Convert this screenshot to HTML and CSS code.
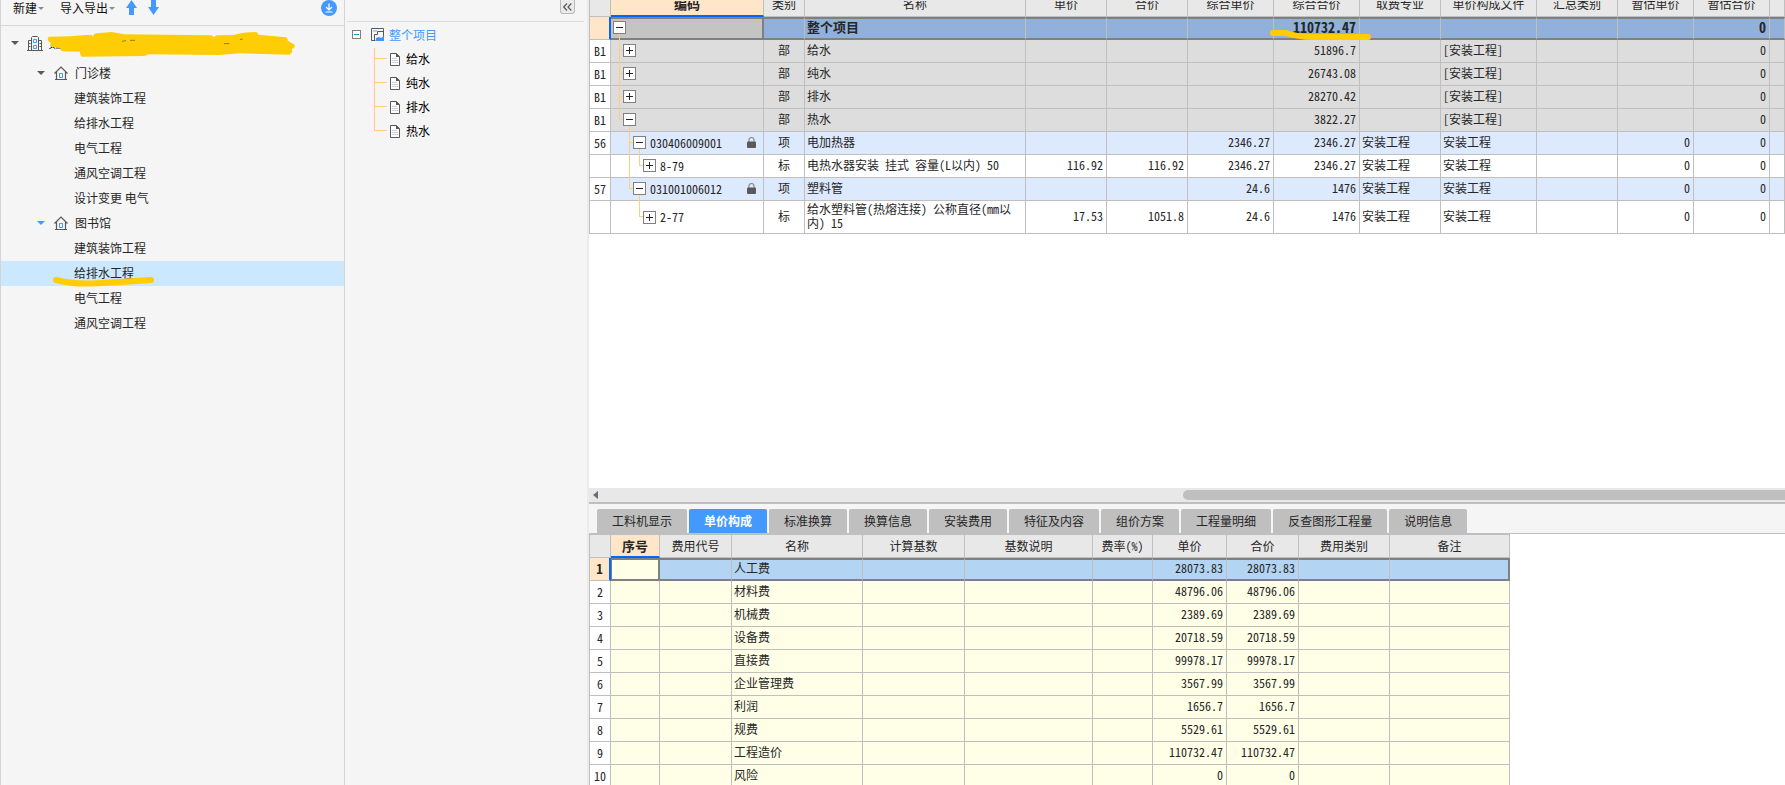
FILE: index.html
```html
<!DOCTYPE html>
<html lang="zh-CN">
<head>
<meta charset="utf-8">
<title>工程计价</title>
<link rel="stylesheet" href="styles.css">
</head>
<body>
<svg class="defs" aria-hidden="true">
  <symbol id="house" viewBox="0 0 14 14">
    <path d="M.5 7.500 7 1l6.500 6.500M2.500 6v7M11.500 6v7M1 13.500h12" fill="none" stroke="#595959" stroke-width="1.200"/>
    <path d="M5.500 7.500h3v4h-3z" fill="none" stroke="#4499ff"/>
  </symbol>
  <symbol id="doc" viewBox="0 0 10 13">
    <path d="M.5.5h6l3 3v9h-9z" fill="#fff" stroke="#595959"/>
    <path d="M6 0v4h4z" fill="#595959"/>
    <path d="M2 5.500h5M2 7.500h6M2 9.500h6" stroke="#d0d0d0"/>
  </symbol>
  <symbol id="lock" viewBox="0 0 9 11">
    <path d="M2 5V3a2.500 2.500 0 0 1 5 0v2" fill="none" stroke="#8c8c8c" stroke-width="1.200"/>
    <rect y="4.500" width="9" height="6.500" rx="1" fill="#595959"/>
  </symbol>
</svg>
<div class="app">
  <aside class="projects">
    <div class="toolbar">
      <button class="menu">新建<i class="caret"></i></button>
      <button class="menu">导入导出<i class="caret"></i></button>
      <button class="tool" aria-label="上移"><svg width="11" height="15" viewBox="0 0 11 15"><path d="M5.500 0 11 8H8v7H3V8H0z" fill="#4499ff"/></svg></button>
      <button class="tool" aria-label="下移"><svg width="11" height="15" viewBox="0 0 11 15"><path d="M5.500 15 0 7h3V0h5v7h3z" fill="#4499ff"/></svg></button>
      <button class="tool download" aria-label="下载"><svg width="16" height="16" viewBox="0 0 16 16"><circle cx="8" cy="8" r="8" fill="#4499ff"/><path d="M8 3.500v6M5 7l3 3 3-3M4.500 12h7" fill="none" stroke="#fff" stroke-width="1.200"/></svg></button>
    </div>
    <ul class="tree">
      <li class="root"><i class="arrow"></i>
        <svg width="16" height="16" viewBox="0 0 16 16"><path d="M4.500 15V2.500l1-1h5l1 1V15M1.500 15V5.500h3M14.500 15V5.500h-3M0 15.500h16M1.500 8.500h2M1.500 11.500h2M12.500 8.500h2M12.500 11.500h2" fill="none" stroke="#595959"/><path d="M6.500 4.500h3v3h-3zM6.500 10.500h3v3h-3z" fill="none" stroke="#4499ff"/></svg>
        <svg class="brush" width="249" height="27" viewBox="141 93 747 81" aria-hidden="true">
          <path d="M148 146l10-5M152 136l14 10M168 144h16" stroke="#262626" stroke-width="3"/>
          <path d="M146 110Q210 110 270 104Q277 104 279 110Q282 100 290 100L335 96L372 103L635 106L641 112L650 106L700 105Q730 96 768 96Q774 98 775 104L858 112Q864 115 863 122L884 134Q886 144 875 147Q880 160 868 164L722 160L655 165L445 163Q440 168 430 168L248 170Q240 170 240 155L188 154Q180 152 182 145L155 140Q150 138 152 128Q138 122 146 110z" fill="#ffcd05"/>
          <path d="M366 124l12-2M390 121h15M672 131h16M720 119l8-2" stroke="#665200" stroke-width="2"/>
        </svg>
      </li>
      <li class="unit"><i class="arrow"></i><svg width="14" height="14"><use href="#house"/></svg>门诊楼</li>
      <li>建筑装饰工程</li>
      <li>给排水工程</li>
      <li>电气工程</li>
      <li>通风空调工程</li>
      <li>设计变更 电气</li>
      <li class="unit"><i class="arrow blue"></i><svg width="14" height="14"><use href="#house"/></svg>图书馆</li>
      <li>建筑装饰工程</li>
      <li class="current">给排水工程
        <svg class="underline" width="104" height="12" viewBox="0 0 104 12" aria-hidden="true"><path d="M4 5Q18 9 40 8.500Q70 7 99 5" fill="none" stroke="#ffcd05" stroke-width="6" stroke-linecap="round"/></svg>
      </li>
      <li>电气工程</li>
      <li>通风空调工程</li>
    </ul>
  </aside>

  <aside class="sections">
    <div class="strip"><button class="collapse" aria-label="收起"><svg width="9" height="8" viewBox="0 0 9 8"><path d="M4 .5.7 4 4 7.500M8.300.5 5 4l3.300 3.500" fill="none" stroke="#595959" stroke-width="1.200"/></svg></button></div>
    <div class="head">
      <button class="mini" aria-label="折叠"></button>
      <svg width="13" height="13" viewBox="0 0 13 13"><path d="M12.500 9V.5H.5v12h4" fill="none" stroke="#595959"/><path d="M2 2h4v2H2z" fill="#a9d0ff"/><path d="M3.500 12.500V6.500h3V3.500h6" fill="none" stroke="#595959"/><path d="M5 13v-3l3-1 2 1 3-2v5z" fill="#3d94ff"/></svg>
      整个项目
    </div>
    <ul class="leaves">
      <li><svg width="10" height="13"><use href="#doc"/></svg>给水</li>
      <li><svg width="10" height="13"><use href="#doc"/></svg>纯水</li>
      <li><svg width="10" height="13"><use href="#doc"/></svg>排水</li>
      <li><svg width="10" height="13"><use href="#doc"/></svg>热水</li>
    </ul>
  </aside>

  <main class="main">
    <section class="upper">
      <table class="grid bill">
        <colgroup><col class="w22"><col class="w153"><col class="w41"><col class="w221"><col class="w81"><col class="w81"><col class="w86"><col class="w86"><col class="w81"><col class="w96"><col class="w81"><col class="w76"><col class="w76"><col></colgroup>
        <thead><tr><th></th><th class="picked"><div>编码</div></th><th><div>类别</div></th><th><div>名称</div></th><th><div>单价</div></th><th><div>合价</div></th><th><div>综合单价</div></th><th><div>综合合价</div></th><th><div>取费专业</div></th><th><div>单价构成文件</div></th><th><div>汇总类别</div></th><th><div>暂估单价</div></th><th><div>暂估合价</div></th><th></th></tr></thead>
        <tbody>
          <tr class="selected"><th></th><td><div class="node l0"><button class="box minus" aria-label="折叠"></button><svg class="lines" width="40" height="21"><path d="M8.500 15v6"/></svg></div></td><td></td><td>整个项目</td><td></td><td></td><td></td><td class="n mark">110732.47<svg class="stroke" width="102" height="12" viewBox="0 0 102 12" aria-hidden="true"><path d="M3 4h13Q28 8 42 8H98" fill="none" stroke="#ffcd05" stroke-width="6" stroke-linecap="round"/></svg></td><td></td><td></td><td></td><td></td><td class="n">0</td><td></td></tr>
          <tr class="part"><th>B1</th><td><div class="node l1"><svg class="lines" width="40" height="23"><path d="M8.500 0v23M8 10.500h5"/></svg><button class="box" aria-label="展开"></button></div></td><td class="c">部</td><td>给水</td><td></td><td></td><td></td><td class="n">51896.7</td><td></td><td>[安装工程]</td><td></td><td></td><td class="n">0</td><td></td></tr>
          <tr class="part"><th>B1</th><td><div class="node l1"><svg class="lines" width="40" height="23"><path d="M8.500 0v23M8 10.500h5"/></svg><button class="box" aria-label="展开"></button></div></td><td class="c">部</td><td>纯水</td><td></td><td></td><td></td><td class="n">26743.08</td><td></td><td>[安装工程]</td><td></td><td></td><td class="n">0</td><td></td></tr>
          <tr class="part"><th>B1</th><td><div class="node l1"><svg class="lines" width="40" height="23"><path d="M8.500 0v23M8 10.500h5"/></svg><button class="box" aria-label="展开"></button></div></td><td class="c">部</td><td>排水</td><td></td><td></td><td></td><td class="n">28270.42</td><td></td><td>[安装工程]</td><td></td><td></td><td class="n">0</td><td></td></tr>
          <tr class="part"><th>B1</th><td><div class="node l1"><svg class="lines" width="40" height="23"><path d="M8.500 0v11M8 10.500h5M18.500 17v6"/></svg><button class="box minus" aria-label="折叠"></button></div></td><td class="c">部</td><td>热水</td><td></td><td></td><td></td><td class="n">3822.27</td><td></td><td>[安装工程]</td><td></td><td></td><td class="n">0</td><td></td></tr>
          <tr class="item"><th>56</th><td><div class="node l2"><svg class="lines" width="40" height="23"><path d="M18.500 0v23M18 10.500h5M28.500 17v6"/></svg><button class="box minus" aria-label="折叠"></button>030406009001<svg class="lock" width="9" height="11"><use href="#lock"/></svg></div></td><td class="c">项</td><td>电加热器</td><td></td><td></td><td class="n">2346.27</td><td class="n">2346.27</td><td>安装工程</td><td>安装工程</td><td></td><td class="n">0</td><td class="n">0</td><td></td></tr>
          <tr><th></th><td><div class="node l3"><svg class="lines" width="40" height="23"><path d="M18.500 0v23M28.500 0v11M28 10.500h5"/></svg><button class="box" aria-label="展开"></button>8-79</div></td><td class="c">标</td><td>电热水器安装 挂式 容量(L以内) 50</td><td class="n">116.92</td><td class="n">116.92</td><td class="n">2346.27</td><td class="n">2346.27</td><td>安装工程</td><td>安装工程</td><td></td><td class="n">0</td><td class="n">0</td><td></td></tr>
          <tr class="item"><th>57</th><td><div class="node l2"><svg class="lines" width="40" height="23"><path d="M18.500 0v11M18 10.500h5M28.500 17v6"/></svg><button class="box minus" aria-label="折叠"></button>031001006012<svg class="lock" width="9" height="11"><use href="#lock"/></svg></div></td><td class="c">项</td><td>塑料管</td><td></td><td></td><td class="n">24.6</td><td class="n">1476</td><td>安装工程</td><td>安装工程</td><td></td><td class="n">0</td><td class="n">0</td><td></td></tr>
          <tr class="tall"><th></th><td><div class="node l3"><svg class="lines" width="40" height="32"><path d="M28.500 0v16M28 15.500h5"/></svg><button class="box" aria-label="展开"></button>2-77</div></td><td class="c">标</td><td>给水塑料管(热熔连接) 公称直径(mm以<br>内) 15</td><td class="n">17.53</td><td class="n">1051.8</td><td class="n">24.6</td><td class="n">1476</td><td>安装工程</td><td>安装工程</td><td></td><td class="n">0</td><td class="n">0</td><td></td></tr>
        </tbody>
      </table>
    </section>
    <section class="lower">
      <div class="scrollbar"><svg width="5" height="8" viewBox="0 0 5 8"><path d="M5 0v8L0 4z" fill="#6b6b73"/></svg><div class="thumb"></div></div>
      <div class="tabs" role="tablist">
        <button role="tab">工料机显示</button><button role="tab" class="active" aria-selected="true">单价构成</button><button role="tab">标准换算</button><button role="tab">换算信息</button><button role="tab">安装费用</button><button role="tab">特征及内容</button><button role="tab">组价方案</button><button role="tab">工程量明细</button><button role="tab">反查图形工程量</button><button role="tab">说明信息</button>
      </div>
      <div class="detail">
        <table class="grid cost">
          <colgroup><col class="w22"><col class="w49"><col class="w72"><col class="w131"><col class="w102"><col class="w128"><col class="w60"><col class="w74"><col class="w72"><col class="w91"><col class="w120"></colgroup>
          <thead><tr><th></th><th class="picked">序号</th><th>费用代号</th><th>名称</th><th>计算基数</th><th>基数说明</th><th>费率(%)</th><th>单价</th><th>合价</th><th>费用类别</th><th>备注</th></tr></thead>
          <tbody>
            <tr class="selected"><th>1</th><td></td><td></td><td>人工费</td><td></td><td></td><td></td><td class="n">28073.83</td><td class="n">28073.83</td><td></td><td></td></tr>
            <tr><th>2</th><td></td><td></td><td>材料费</td><td></td><td></td><td></td><td class="n">48796.06</td><td class="n">48796.06</td><td></td><td></td></tr>
            <tr><th>3</th><td></td><td></td><td>机械费</td><td></td><td></td><td></td><td class="n">2389.69</td><td class="n">2389.69</td><td></td><td></td></tr>
            <tr><th>4</th><td></td><td></td><td>设备费</td><td></td><td></td><td></td><td class="n">20718.59</td><td class="n">20718.59</td><td></td><td></td></tr>
            <tr><th>5</th><td></td><td></td><td>直接费</td><td></td><td></td><td></td><td class="n">99978.17</td><td class="n">99978.17</td><td></td><td></td></tr>
            <tr><th>6</th><td></td><td></td><td>企业管理费</td><td></td><td></td><td></td><td class="n">3567.99</td><td class="n">3567.99</td><td></td><td></td></tr>
            <tr><th>7</th><td></td><td></td><td>利润</td><td></td><td></td><td></td><td class="n">1656.7</td><td class="n">1656.7</td><td></td><td></td></tr>
            <tr><th>8</th><td></td><td></td><td>规费</td><td></td><td></td><td></td><td class="n">5529.61</td><td class="n">5529.61</td><td></td><td></td></tr>
            <tr><th>9</th><td></td><td></td><td>工程造价</td><td></td><td></td><td></td><td class="n">110732.47</td><td class="n">110732.47</td><td></td><td></td></tr>
            <tr><th>10</th><td></td><td></td><td>风险</td><td></td><td></td><td></td><td class="n">0</td><td class="n">0</td><td></td><td></td></tr>
          </tbody>
        </table>
      </div>
    </section>
  </main>
</div>
</body>
</html>
```
FILE: styles.css
```css
* { box-sizing: border-box; }
body { margin: 0; background: #f5f5f5; color: #262626; font: 12px/16px "Noto Sans CJK SC", sans-serif; }
button { margin: 0; padding: 0; border: 0; background: none; color: inherit; font: inherit; }
svg { display: block; flex: none; }
ul { list-style: none; margin: 0; padding: 0; }
.defs { position: absolute; width: 0; height: 0; }
.app { display: grid; grid-template-columns: 345px 244px minmax(0, 1fr); grid-template-rows: minmax(0, 1fr); height: 100vh; overflow: hidden; }

/* project panel */
.projects { border-left: 1px solid #d4d4d4; border-right: 1px solid #d4d4d4; }
.toolbar { display: flex; align-items: flex-start; height: 26px; padding: 0 7px 0 12px; border-bottom: 1px solid #d9d9d9; color: #111; }
.menu { display: flex; align-items: center; gap: 1px; margin-right: 16px; white-space: nowrap; }
.caret { border: solid transparent; border-width: 3px 3px 0; border-top-color: #8c8c8c; }
.menu + .menu { margin-right: 11px; }
.tool + .tool { margin-left: 11px; }
.toolbar .download { margin-left: auto; }
.tree li { position: relative; display: flex; align-items: center; height: 25px; padding: 0 0 2px 73px; }
.tree .root { height: 35px; padding-left: 10px; gap: 8px; }
.tree .unit { padding-left: 36px; gap: 7px; }
.tree .unit .arrow { margin-right: 2px; }
.arrow { border: solid transparent; border-width: 4px 4px 0; border-top-color: #595959; }
.arrow.blue { border-top-color: #4499ff; }
.tree .current { background: #cce8ff; }
.brush { position: absolute; left: 46px; top: 5px; }
.underline { position: absolute; left: 51px; top: 14px; }

/* section panel */
.sections { padding: 0 3px 0 2px; border-right: 2px solid #ebebeb; }
.strip { display: flex; justify-content: flex-end; align-items: flex-start; height: 22px; padding-right: 9px; border-bottom: 1px solid #dcdcdc; }
.collapse { display: flex; align-items: center; justify-content: center; width: 15px; height: 14px; border: 1px solid #b8b8b8; border-top: 0; border-radius: 0 0 3px 3px; background: #ebebeb; }
.head { display: flex; align-items: center; height: 26px; padding: 0 0 1px 5px; color: #4499ff; }
.head svg { margin: 0 5px 0 10px; }
.mini { width: 9px; height: 9px; border: 1px solid #808080; background: linear-gradient(#1f9bd1, #1f9bd1) center / 5px 1px no-repeat #fff; }
.leaves { margin-left: 27px; color: #000; }
.leaves li { display: flex; align-items: center; gap: 6px; height: 24px; padding: 0 0 2px 16px; background: linear-gradient(#ffcc80, #ffcc80) 0 10px / 13px 1px no-repeat, linear-gradient(#ffcc80, #ffcc80) 0 0 / 1px 100% no-repeat; }
.leaves li:last-child { background-size: 13px 1px, 1px 11px; }

/* right side */
.main { display: grid; grid-template-rows: minmax(0, 488fr) minmax(0, 297fr); min-width: 0; }
.upper { overflow: hidden; background: #fff; }
.lower { display: flex; flex-direction: column; overflow: hidden; }
.grid { table-layout: fixed; border-collapse: separate; border-spacing: 0; border-left: 1px solid #bfbfbf; font: 12px/14px "Noto Sans Mono CJK SC", "Noto Sans CJK SC", monospace; }
.bill { width: 100%; }
.w22 { width: 21px; } .w41 { width: 41px; } .w49 { width: 49px; } .w60 { width: 60px; }
.w72 { width: 72px; } .w74 { width: 74px; } .w76 { width: 76px; } .w81 { width: 81px; }
.w86 { width: 86px; } .w91 { width: 91px; } .w96 { width: 96px; } .w102 { width: 102px; }
.w120 { width: 120px; } .w128 { width: 128px; } .w131 { width: 131px; } .w153 { width: 153px; } .w221 { width: 221px; }
.grid th, .grid td { height: 23px; padding: 0 2px 2px; border: solid #bfbfbf; border-width: 0 1px 1px 0; white-space: nowrap; text-align: left; vertical-align: middle; font-weight: 400; }
.grid th { padding: 0; text-align: center; }
.grid thead th { background: #e8e8e8; }
.grid thead .picked { border-bottom: 2px solid #0066ff; background: #ffe6c8; font-size: 13px; font-weight: 700; }
.grid tbody th { background: #fff; }
.grid .n { padding-right: 3px; text-align: right; }
.grid .c { text-align: center; }
.bill thead th { height: 17px; }
.bill thead div { display: flex; align-items: flex-end; justify-content: center; height: 14px; overflow: hidden; line-height: 22px; }
.part td { background: #ddd; }
.item td { background: #dde9fd; }
.grid .selected td { padding-bottom: 3px; border-top: 2px solid #808080; border-bottom: 2px solid #808080; }
.grid .selected th { border-right: 2px solid #0066ff; background: #ffe6c8; font-size: 13px; font-weight: 700; }
.grid .selected th + td { border-right: 2px solid #808080; }
.bill .selected td { background: #91b1db; font-size: 13px; font-weight: 700; }
.bill .selected .n { font-size: 14px; }
.bill .selected th + td { background: #c4c4c4; }
.grid .tall td { height: 33px; }
.grid.bill tbody th + td { padding: 0; }

.node { position: relative; display: flex; align-items: center; gap: 4px; height: 22px; padding-bottom: 1px; }
.tall .node { height: 32px; padding-bottom: 0; }
.node.l0 { height: 19px; padding: 0 0 2px 2px; }
.l1 { padding-left: 12px; }
.l2 { padding-left: 22px; }
.l3 { padding-left: 32px; }
.lines { position: absolute; left: 0; top: 0; overflow: visible; fill: none; stroke: #ffcc80; }
.box { position: relative; flex: none; width: 13px; height: 13px; border: 1px solid #808080; background: linear-gradient(#262626, #262626) center / 7px 1px no-repeat, linear-gradient(#262626, #262626) center / 1px 7px no-repeat, #fff; }
.box.minus { background: linear-gradient(#262626, #262626) center / 7px 1px no-repeat, #fff; }
.lock { margin: 0 7px 0 auto; }
.mark { position: relative; }
.stroke { position: absolute; left: -4px; top: 10px; z-index: 1; }

.scrollbar { display: flex; flex: none; align-items: center; height: 16px; padding-left: 4px; border-bottom: 2px solid #bfbfbf; background: #e8e8e8; }
.thumb { flex: 1; height: 10px; margin-left: 585px; border-radius: 5px 0 0 5px; background: #bfbfbf; }
.tabs { display: flex; flex: none; gap: 2px; height: 30px; padding: 5px 0 0 8px; border-bottom: 1px solid #bfbfbf; }
.tabs button { padding: 0 15px; border-radius: 2px 2px 0 0; background: #bfbfbf; white-space: nowrap; }
.tabs .active { background: #4499ff; color: #fff; font-weight: 700; }
.detail { flex: 1; min-height: 0; overflow: hidden; background: #fff; }
.cost { width: 921px; border-top: 1px solid #bfbfbf; }
.cost tbody td { background: #ffffe8; }
.cost .selected td { background: #b3d4f2; }
.cost .selected th + td { background: #ffffe8; border-left: 1px solid #808080; }
.cost .selected td:last-child { border-right: 2px solid #808080; }
```
